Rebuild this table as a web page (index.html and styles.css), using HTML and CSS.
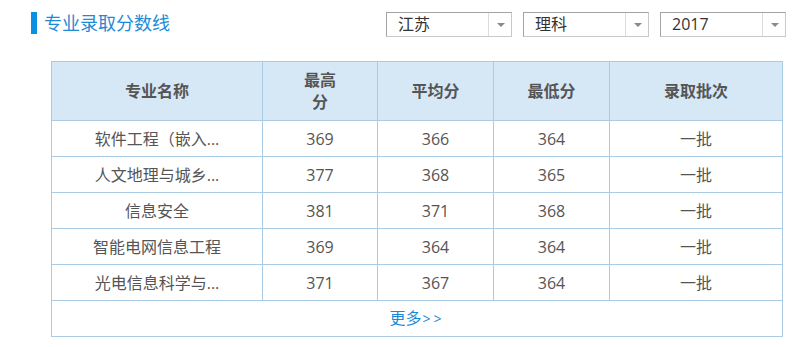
FILE: index.html
```html
<!DOCTYPE html>
<html lang="zh-CN">
<head>
<meta charset="utf-8">
<title>专业录取分数线</title>
<link rel="stylesheet" href="styles.css">
</head>
<body>
<div class="page">
  <div class="head">
    <h2 class="title"><span class="bar"></span>专业录取分数线</h2>
    <div class="filters">
      <div class="combo"><span class="val">江苏</span><span class="arrow"><i></i></span></div>
      <div class="combo"><span class="val">理科</span><span class="arrow"><i></i></span></div>
      <div class="combo"><span class="val">2017</span><span class="arrow"><i></i></span></div>
    </div>
  </div>
  <table class="scores">
    <colgroup>
      <col class="c1"><col class="c2"><col class="c3"><col class="c4"><col class="c5">
    </colgroup>
    <thead>
      <tr><th>专业名称</th><th>最高<br>分</th><th>平均分</th><th>最低分</th><th>录取批次</th></tr>
    </thead>
    <tbody>
      <tr><td>软件工程（嵌入...</td><td>369</td><td>366</td><td>364</td><td>一批</td></tr>
      <tr><td>人文地理与城乡...</td><td>377</td><td>368</td><td>365</td><td>一批</td></tr>
      <tr><td>信息安全</td><td>381</td><td>371</td><td>368</td><td>一批</td></tr>
      <tr><td>智能电网信息工程</td><td>369</td><td>364</td><td>364</td><td>一批</td></tr>
      <tr><td>光电信息科学与...</td><td>371</td><td>367</td><td>364</td><td>一批</td></tr>
      <tr class="more"><td colspan="5"><a href="#">更多<span class="gt">&gt;&gt;</span></a></td></tr>
    </tbody>
  </table>
</div>
</body>
</html>
```

FILE: styles.css
```css
* { box-sizing: border-box; }
html, body { margin: 0; padding: 0; background: #fff; }
body {
  font-family: "Open Sans", "Noto Sans CJK SC", sans-serif;
  color: #555;
}
.page {
  padding: 12px 7px 0 31px;
}
.head {
  display: flex;
  justify-content: space-between;
  align-items: flex-start;
}
.title {
  margin: 0;
  display: flex;
  align-items: center;
  height: 22px;
  font-size: 18px;
  font-weight: normal;
  color: #1f8ad6;
  line-height: 22px;
}
.bar {
  display: block;
  width: 6px;
  height: 22px;
  background: #0a8fe2;
  margin-right: 7px;
}
.filters {
  display: flex;
  gap: 11px;
}
.combo {
  width: 126px;
  height: 25px;
  display: flex;
  border: 1px solid;
  border-color: #a3a3a3 #c9c9c9 #c9c9c9 #a3a3a3;
  background: #fff;
}
.combo .val {
  flex: 1;
  padding-left: 11px;
  font-size: 16px;
  line-height: 23px;
  color: #333;
}
.combo .arrow {
  width: 23px;
  border-left: 1px solid #dcdcdc;
  display: flex;
  align-items: center;
  justify-content: center;
}
.combo .arrow i {
  display: block;
  width: 0;
  height: 0;
  border-left: 4px solid transparent;
  border-right: 4px solid transparent;
  border-top: 4px solid #8a8a8a;
  margin-left: 1px;
}
.scores {
  margin: 24px 0 0 20px;
  border-collapse: collapse;
  table-layout: fixed;
  width: 731px;
  border: 1px solid #a9cbe4;
  font-size: 16px;
}
.c1 { width: 211px; }
.c2 { width: 115px; }
.c3 { width: 116px; }
.c4 { width: 116px; }
.c5 { width: 173px; }
.scores th, .scores td {
  border: 1px solid #a9cbe4;
  text-align: center;
  padding: 0;
  white-space: nowrap;
}
.scores th {
  background: #d6e8f6;
  height: 59px;
  font-weight: bold;
  color: #555;
  line-height: 22px;
}
.scores td {
  height: 36px;
  color: #555;
  line-height: 22px;
}
.more a {
  color: #1a8ad8;
  text-decoration: none;
  font-size: 16px;
}
.more .gt {
  font-size: 14px;
  letter-spacing: 3px;
  margin-left: 1px;
}
```
